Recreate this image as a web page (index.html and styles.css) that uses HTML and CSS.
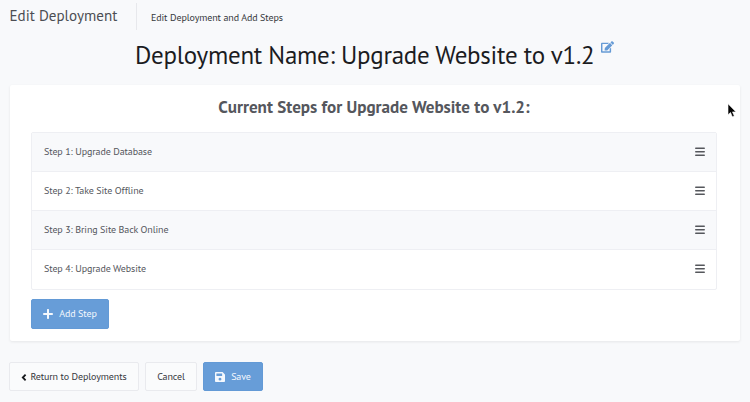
FILE: index.html
```
<!DOCTYPE html>
<html lang="en">
<head>
<meta charset="utf-8">
<title>Edit Deployment</title>
<link rel="stylesheet" href="styles.css">
</head>
<body>
<svg width="0" height="0" class="defs"><symbol id="bars" viewBox="0 0 10 10"><path d="M.8 1.300h8.400M.8 4.800h8.400M.8 8.300h8.400" stroke="#55575c" stroke-width="1.600" stroke-linecap="round"/></symbol></svg>
<header class="topbar">
  <div class="section">Edit Deployment</div>
  <div class="subtitle">Edit Deployment and Add Steps</div>
</header>
<div class="title">
  <h1>Deployment Name: Upgrade Website to v1.2</h1>
  <svg class="edit" viewBox="0 0 576 512"><path d="M402.600 83.200l90.200 90.200c3.800 3.800 3.800 10 0 13.800L274.400 405.600l-92.800 10.300c-12.400 1.400-22.900-9.100-21.500-21.500l10.300-92.800L388.800 83.200c3.800-3.800 10-3.800 13.800 0zm162-22.900l-48.800-48.800c-15.200-15.200-39.900-15.200-55.200 0l-35.400 35.400c-3.800 3.800-3.800 10 0 13.800l90.200 90.200c3.800 3.800 10 3.800 13.800 0l35.400-35.400c15.200-15.300 15.200-40 0-55.200zM384 346.200V448H64V128h229.800c3.200 0 6.200-1.300 8.500-3.500l40-40c7.600-7.600 2.200-20.500-8.500-20.500H48C21.500 64 0 85.500 0 112v352c0 26.500 21.500 48 48 48h352c26.500 0 48-21.500 48-48V306.200c0-10.700-12.900-16-20.500-8.500l-40 40c-2.200 2.300-3.500 5.300-3.500 8.500z"/></svg>
</div>
<main class="card">
  <h2>Current Steps for Upgrade Website to v1.2:</h2>
  <ul class="steps">
    <li><span>Step 1: Upgrade Database</span><svg class="handle"><use href="#bars"/></svg></li>
    <li><span>Step 2: Take Site Offline</span><svg class="handle"><use href="#bars"/></svg></li>
    <li><span>Step 3: Bring Site Back Online</span><svg class="handle"><use href="#bars"/></svg></li>
    <li><span>Step 4: Upgrade Website</span><svg class="handle"><use href="#bars"/></svg></li>
  </ul>
  <button class="btn primary add"><svg width="10" height="10" viewBox="0 0 10 10"><path d="M5 .9v8.200M.9 5h8.200" stroke="currentColor" stroke-width="2" stroke-linecap="round"/></svg><span>Add Step</span></button>
</main>
<footer class="actions">
  <button class="btn return"><svg width="6" height="8" viewBox="0 0 6 8"><path d="M4.600 1.600L1.800 4.500l2.800 2.800" fill="none" stroke="#16181c" stroke-width="1.800"/></svg><span>Return to Deployments</span></button>
  <button class="btn cancel"><span>Cancel</span></button>
  <button class="btn primary save"><svg width="10" height="10" viewBox="0 0 448 448"><path fill="currentColor" fill-rule="evenodd" d="M434 98L350 14C341 5 329 0 316 0H48C22 0 0 22 0 48v352c0 26 22 48 48 48h352c26 0 48-22 48-48V132c0-13-5-25-14-34zM224 384a64 64 0 1 1 0-128 64 64 0 0 1 0 128zM64 64h256v112H64z"/></svg><span>Save</span></button>
</footer>
<svg class="cursor" width="10" height="15" viewBox="0 0 10 15"><path d="M1 .8v11l2.500-2.300 1.800 4.300 2-.9-1.800-4H9z" fill="#050505" stroke="#fff" stroke-width=".6" stroke-linejoin="round"/></svg>
</body>
</html>
```
FILE: styles.css
```
* { box-sizing: border-box; }
body {
  margin: 0;
  height: 402px;
  overflow: hidden;
  background: #f8f9fb;
  color: #55575d;
  font: 10px/14px "PT Sans", "Open Sans", "Noto Sans", sans-serif;
  font-stretch: 87%;
  letter-spacing: -.1px;
}
h1, h2, ul { margin: 0; padding: 0; font-weight: 400; }
.defs { position: absolute; }
.topbar { display: flex; height: 33px; padding: 3px 0 0 9.5px; }
.section { width: 127.5px; height: 27px; border-right: 1px solid #e7e8ec; font-size: 15.1px; line-height: 26px; letter-spacing: 0; color: #4c4e53; white-space: nowrap; }
.subtitle { padding-left: 14px; line-height: 30px; color: #36383c; }
.title { display: flex; height: 52px; padding-left: 135px; color: #1b1c1f; }
h1 { width: 466px; font-size: 25px; line-height: 45px; letter-spacing: -.28px; white-space: nowrap; }
.edit { width: 13px; height: 12px; margin-top: 8px; fill: #659ad5; }
.card { height: 256px; margin: 0 10px; padding: 10px 23px 0 21px; background: #fff; border-radius: 2px; box-shadow: 0 1px 3px #00000014; }
h2 { text-align: center; font-size: 17.1px; line-height: 24px; font-weight: 700; letter-spacing: 0; height: 37px; white-space: nowrap; }
.steps { list-style: none; border: 1px solid #eeeff3; height: 158px; border-radius: 2px; }
.steps li { display: flex; align-items: center; justify-content: space-between; height: 39px; padding: 0 11px 0 12px; border-bottom: 1px solid #eeeff3; }
.steps li:nth-child(odd) { background: #f8f9fb; }
.steps li:last-child { border-bottom: 0; height: 38px; }
.handle { width: 10px; height: 10px; }
.btn { display: flex; align-items: center; justify-content: center; height: 29px; padding: 0; border: 1px solid #e9eaee; border-radius: 2px; background: #fafbfc; color: #36383c; font: inherit; letter-spacing: inherit; white-space: nowrap; }
.primary { border-color: #639ad6; background: #679dd8; color: #f4f8fd; gap: 6px; }
.add { width: 78px; height: 30px; margin-top: 9px; }
.actions { display: flex; gap: 6px; padding: 21px 0 0 9px; }
.return { width: 130px; gap: 3px; }
.cancel { width: 52px; }
.save { width: 60px; }
.cursor { position: absolute; left: 727px; top: 103px; }
```
